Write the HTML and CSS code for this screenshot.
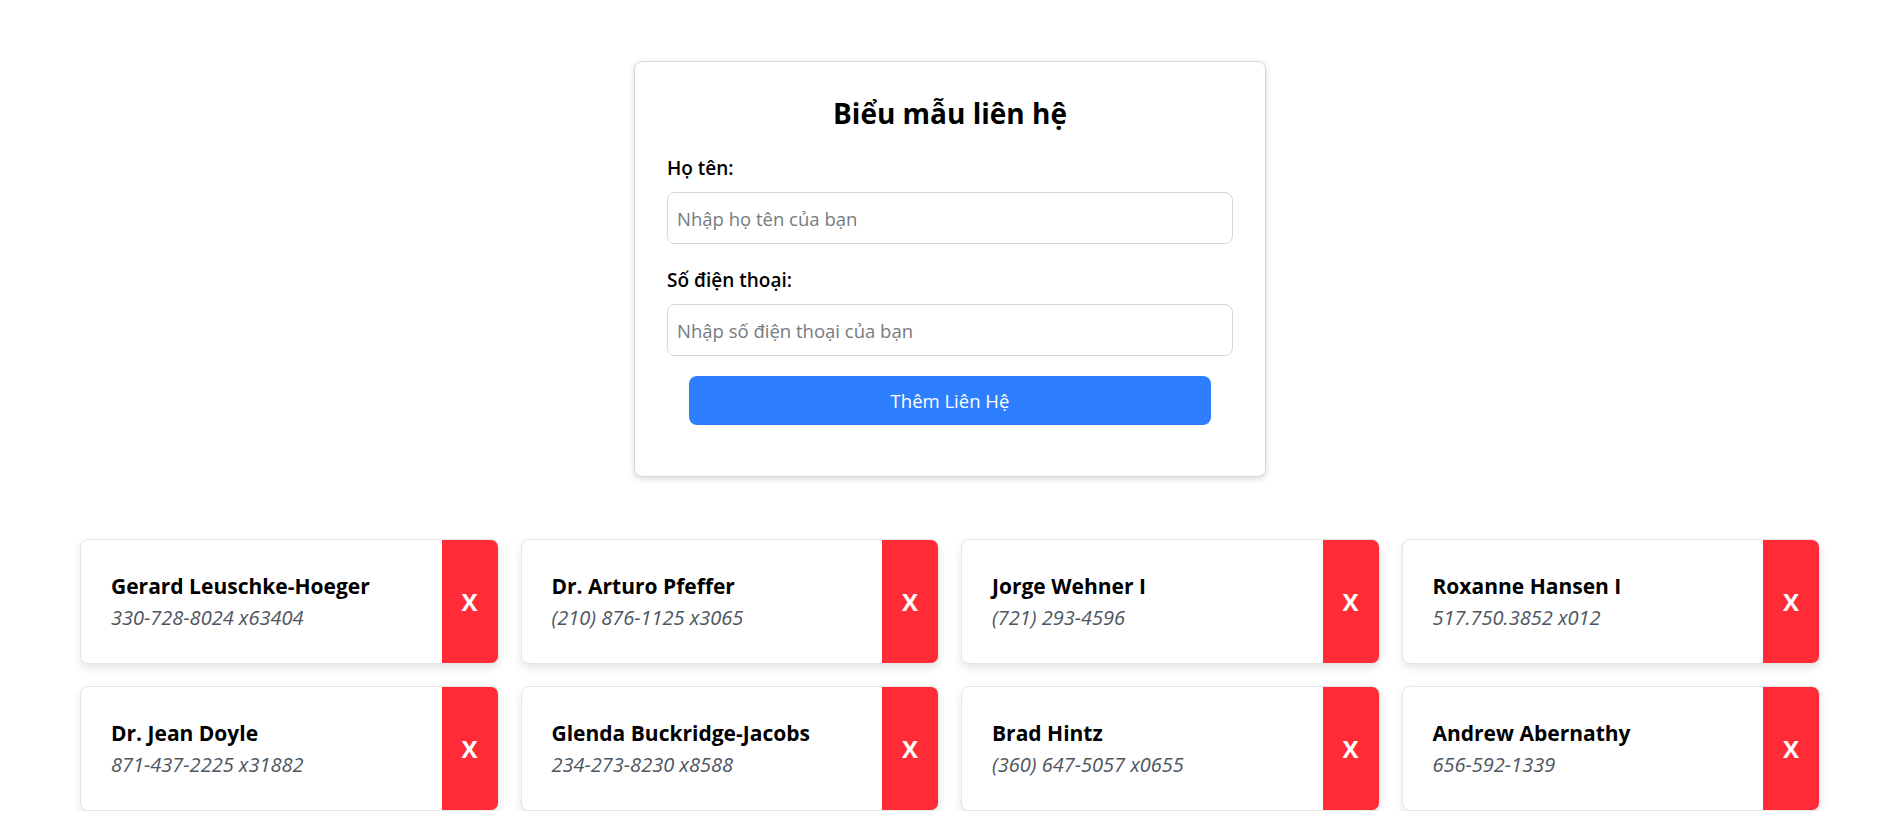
FILE: index.html
```html
<!DOCTYPE html>
<html lang="vi">
<head>
<meta charset="utf-8">
<title>Biểu mẫu liên hệ</title>
<link rel="stylesheet" href="styles.css">
</head>
<body>
<main class="page">
  <form class="contact-form">
    <h2 class="form-title">Biểu mẫu liên hệ</h2>
    <label class="field-label" for="name">Họ tên:</label>
    <input class="field-input" id="name" type="text" placeholder="Nhập họ tên của bạn">
    <label class="field-label" for="phone">Số điện thoại:</label>
    <input class="field-input" id="phone" type="text" placeholder="Nhập số điện thoại của bạn">
    <button class="submit-btn" type="button">Thêm Liên Hệ</button>
  </form>

  <section class="contact-grid">
    <div class="card"><div class="card-info"><div class="card-name">Gerard Leuschke-Hoeger</div><div class="card-phone">330-728-8024 x63404</div></div><button class="card-del" type="button">X</button></div>
    <div class="card"><div class="card-info"><div class="card-name">Dr. Arturo Pfeffer</div><div class="card-phone">(210) 876-1125 x3065</div></div><button class="card-del" type="button">X</button></div>
    <div class="card"><div class="card-info"><div class="card-name">Jorge Wehner I</div><div class="card-phone">(721) 293-4596</div></div><button class="card-del" type="button">X</button></div>
    <div class="card"><div class="card-info"><div class="card-name">Roxanne Hansen I</div><div class="card-phone">517.750.3852 x012</div></div><button class="card-del" type="button">X</button></div>
    <div class="card"><div class="card-info"><div class="card-name">Dr. Jean Doyle</div><div class="card-phone">871-437-2225 x31882</div></div><button class="card-del" type="button">X</button></div>
    <div class="card"><div class="card-info"><div class="card-name">Glenda Buckridge-Jacobs</div><div class="card-phone">234-273-8230 x8588</div></div><button class="card-del" type="button">X</button></div>
    <div class="card"><div class="card-info"><div class="card-name">Brad Hintz</div><div class="card-phone">(360) 647-5057 x0655</div></div><button class="card-del" type="button">X</button></div>
    <div class="card"><div class="card-info"><div class="card-name">Andrew Abernathy</div><div class="card-phone">656-592-1339</div></div><button class="card-del" type="button">X</button></div>
  </section>
</main>
</body>
</html>
```

FILE: styles.css
```css
* { box-sizing: border-box; }

html, body {
  margin: 0;
  padding: 0;
  background: #ffffff;
  font-family: "Open Sans", "Noto Sans", "Liberation Sans", sans-serif;
  color: #000;
}

.page {
  padding-top: 61px;
  display: flex;
  flex-direction: column;
  align-items: center;
}

.contact-form {
  width: 632px;
  border: 1px solid #d4d6dc;
  border-radius: 8px;
  box-shadow: 0 2px 6px rgba(0, 0, 0, 0.15);
  padding: 32px 32px 51px;
  display: flex;
  flex-direction: column;
  background: #fff;
}

.form-title {
  margin: 0 0 24px;
  text-align: center;
  font-size: 28px;
  line-height: 38px;
  font-weight: 700;
}

.field-label {
  font-size: 19px;
  font-weight: 600;
  line-height: 24px;
  margin-bottom: 12px;
}

.field-input {
  height: 52px;
  border: 1px solid #d4d6dc;
  border-radius: 8px;
  padding: 0 9px;
  font-family: inherit;
  font-size: 18.5px;
  color: #333;
  margin-bottom: 24px;
  outline: none;
}

.field-input::placeholder { color: #777a80; }

.submit-btn {
  margin: -4px 22px 0;
  height: 49px;
  border: none;
  border-radius: 8px;
  background: #2d7fff;
  color: #fff;
  font-family: inherit;
  font-size: 18.5px;
}

.contact-grid {
  align-self: stretch;
  margin: 62px 80px 0;
  display: grid;
  grid-template-columns: repeat(4, 1fr);
  gap: 22px;
}

.card {
  height: 125px;
  display: flex;
  border: 1px solid #e6e6e6;
  border-radius: 8px;
  box-shadow: 0 4px 8px rgba(0, 0, 0, 0.1);
  background: #fff;
  overflow: hidden;
}

.card-info {
  flex: 1;
  padding-left: 30px;
  display: flex;
  flex-direction: column;
  justify-content: center;
  gap: 5px;
}

.card-name {
  font-size: 21px;
  font-weight: 700;
  line-height: 28px;
}

.card-phone {
  font-size: 20px;
  font-style: italic;
  color: #4d5560;
  line-height: 26px;
}

.card-del {
  width: 56px;
  border: none;
  background: #ff2c38;
  color: #fff;
  font-family: inherit;
  font-size: 24px;
  font-weight: 700;
  padding: 0;
}
```
